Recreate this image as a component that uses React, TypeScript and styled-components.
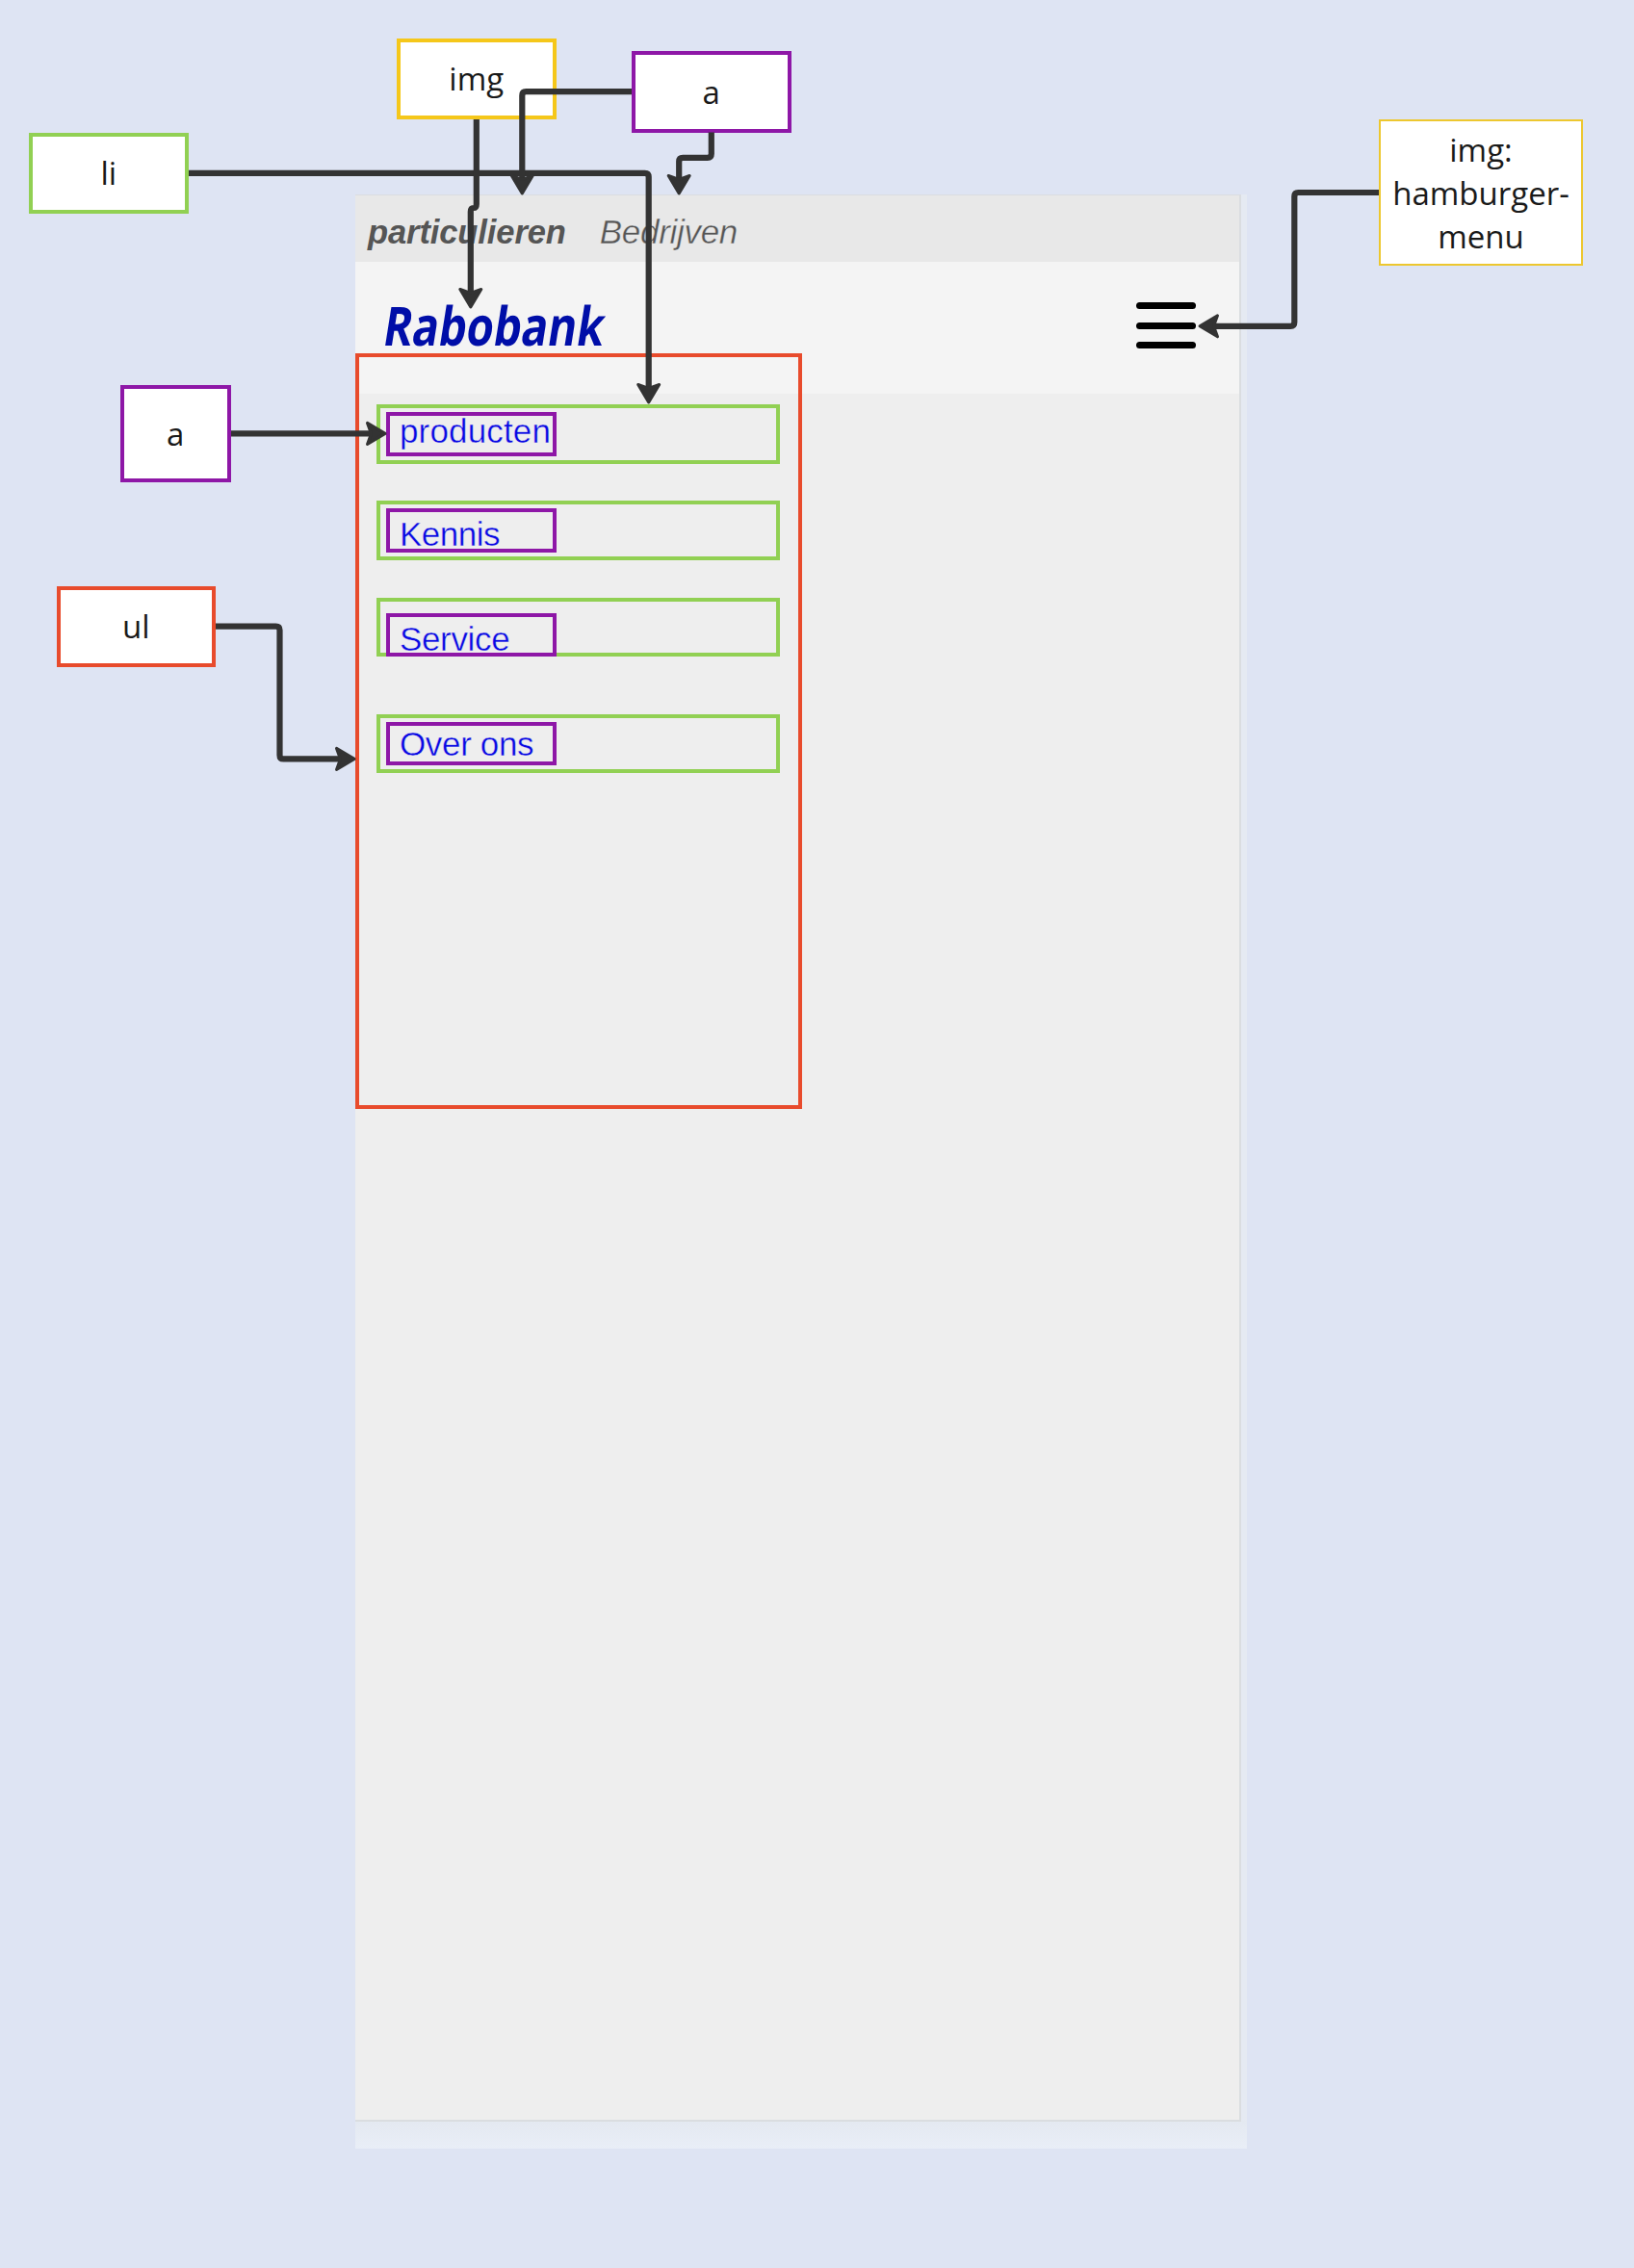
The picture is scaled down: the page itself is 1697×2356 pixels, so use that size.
import React from "react";
import styled, { createGlobalStyle } from "styled-components";

const GlobalStyle = createGlobalStyle`
  html, body { margin: 0; padding: 0; background: #dee4f3; }
  * { box-sizing: border-box; }
`;

const color = {
  green: "#91d053",
  yellow: "#f5c71a",
  purple: "#8e17a7",
  red: "#e84b2c",
  ink: "#333333",
};

const Board = styled.div`
  position: relative;
  width: 1697px;
  height: 2356px;
  padding: 202px 0 0 369px;
  overflow: hidden;
  background: #dee4f3;
`;

const Mockup = styled.div`
  width: 926px;
  height: 2030px;
  padding: 0 6px 28px 0;
  background: linear-gradient(#e5eaf2 0, #e5eaf2 2000px, #e4e9f1 2002px, #e9eef7 2030px);
`;

const Page = styled.div`
  display: flex;
  flex-direction: column;
  height: 2002px;
  border: solid #dadde0;
  border-width: 1px 2px 2px 0;
  background: #eeeeee;
  font-family: "Liberation Sans", Arial, sans-serif;
`;

const TopBar = styled.nav`
  display: flex;
  flex: none;
  gap: 35px;
  height: 69px;
  padding: 18px 0 0 13px;
  background: #e8e8e8;
`;

const Audience = styled.a<{ $active?: boolean }>`
  color: #555;
  font-size: ${(p) => (p.$active ? "34.5px" : "35px")};
  font-style: italic;
  font-weight: ${(p) => (p.$active ? 700 : 400)};
  line-height: 40px;
  letter-spacing: ${(p) => (p.$active ? "-0.1px" : "-0.3px")};
  -webkit-text-stroke: ${(p) => (p.$active ? "0" : "0.4px #e8e8e8")};
`;

const Header = styled.header`
  display: flex;
  flex: none;
  justify-content: space-between;
  align-items: flex-start;
  height: 137px;
  padding: 34px 45px 0 24px;
  background: #f4f4f4;
`;

const Logo = styled.svg`
  width: 250px;
  height: 60px;
  overflow: visible;
  font: 700 56px "Open Sans", sans-serif;
  fill: #000ea8;
`;

const Burger = styled.div`
  display: flex;
  flex-direction: column;
  gap: 13.7px;
  width: 62px;
  padding-top: 8px;
`;

const BurgerBar = styled.span`
  height: 7px;
  border-radius: 4px;
  background: #000;
`;

const Menu = styled.ul`
  width: 463.5px;
  height: 785px;
  margin: -42.5px 0 0;
  padding: 49.5px 0 0 18px;
  border: 4px solid ${color.red};
  list-style: none;
`;

const MenuItem = styled.li<{ $gap: number; $inset: number }>`
  width: 419px;
  height: 61.5px;
  margin-bottom: ${(p) => p.$gap}px;
  padding: ${(p) => p.$inset}px 0 0 6px;
  border: 4px solid ${color.green};
`;

const MenuLink = styled.a<{ $drop: number; $tracking: number }>`
  display: flex;
  width: 176.5px;
  height: 45.5px;
  padding: ${(p) => p.$drop}px 0 0 10px;
  border: 4px solid ${color.purple};
  color: #0808e4;
  font-size: 35px;
  line-height: 32px;
  letter-spacing: ${(p) => p.$tracking}px;
  white-space: nowrap;
  -webkit-text-stroke: 0.4px #eee;
`;

const Label = styled.div<{
  $x: number; $y: number; $w: number; $h: number; $color: string; $line?: number;
}>`
  position: absolute;
  left: ${(p) => p.$x}px;
  top: ${(p) => p.$y}px;
  display: flex;
  align-items: center;
  justify-content: center;
  width: ${(p) => p.$w}px;
  height: ${(p) => p.$h}px;
  border: ${(p) => p.$line ?? 4}px solid ${(p) => p.$color};
  background: #fff;
  color: #1a1a1a;
  font: 33px/45px "Open Sans", sans-serif;
  text-align: center;
  white-space: pre-line;
`;

const Connectors = styled.svg`
  position: absolute;
  inset: 0;
  width: 1697px;
  height: 2356px;
  pointer-events: none;
`;

const menu = [
  { text: "producten", gap: 38.5, inset: 4, drop: 0, tracking: 0.15 },
  { text: "Kennis", gap: 39, inset: 4, drop: 7, tracking: -0.5 },
  { text: "Service", gap: 59.5, inset: 12, drop: 7, tracking: -0.35 },
  { text: "Over ons", gap: 0, inset: 4, drop: 3, tracking: -0.35 },
];

const labels = [
  { text: "img", x: 412, y: 39.5, w: 165.5, h: 84.5, color: color.yellow },
  { text: "a", x: 656, y: 53, w: 165.5, h: 84.5, color: color.purple },
  { text: "li", x: 30, y: 137.5, w: 165.5, h: 84.5, color: color.green },
  { text: "img:\nhamburger-\nmenu", x: 1432, y: 124, w: 212, h: 152, color: "#edc72f", line: 2 },
  { text: "a", x: 125, y: 400, w: 114.5, h: 100.5, color: color.purple },
  { text: "ul", x: 58.5, y: 608.5, w: 165.5, h: 84.5, color: color.red },
];

const connectors = [
  { d: "M196 179.8H669.7Q673.7 179.8 673.7 183.8V404", tip: [673.7, 419.5], turn: 90 },
  { d: "M494.8 124V212Q494.8 216 491.8 216Q488.8 216 488.8 220V305", tip: [488.8, 320.5], turn: 90 },
  { d: "M656 95.2H546.3Q542.3 95.2 542.3 99.2V187", tip: [542.3, 202.5], turn: 90 },
  { d: "M738.8 137.5V159.8Q738.8 163.8 734.8 163.8H709.2Q705.2 163.8 705.2 167.8V187", tip: [705.2, 202.5], turn: 90 },
  { d: "M240 450.4H386", tip: [401.5, 450.4], turn: 0 },
  { d: "M224 650.6H286.5Q290.5 650.6 290.5 654.6V784.4Q290.5 788.4 294.5 788.4H354", tip: [369.5, 788.4], turn: 0 },
  { d: "M1432 200H1348.3Q1344.3 200 1344.3 204V334.8Q1344.3 338.8 1340.3 338.8H1260", tip: [1244.5, 338.8], turn: 180 },
];

export default function App() {
  return (
    <>
      <GlobalStyle />
      <Board>
        <Mockup>
          <Page>
            <TopBar>
              <Audience $active>particulieren</Audience>
              <Audience>Bedrijven</Audience>
            </TopBar>
            <Header>
              <Logo>
                <text
                  transform="translate(3 52.5) skewX(-9)"
                  textLength="229"
                  lengthAdjust="spacingAndGlyphs"
                >
                  Rabobank
                </text>
              </Logo>
              <Burger>
                <BurgerBar />
                <BurgerBar />
                <BurgerBar />
              </Burger>
            </Header>
            <Menu>
              {menu.map((item) => (
                <MenuItem key={item.text} $gap={item.gap} $inset={item.inset}>
                  <MenuLink $drop={item.drop} $tracking={item.tracking}>
                    {item.text}
                  </MenuLink>
                </MenuItem>
              ))}
            </Menu>
          </Page>
        </Mockup>
        {labels.map((l) => (
          <Label key={`${l.x}-${l.y}`} $x={l.x} $y={l.y} $w={l.w} $h={l.h} $color={l.color} $line={l.line}>
            {l.text}
          </Label>
        ))}
        <Connectors viewBox="0 0 1697 2356">
          {connectors.map((c) => (
            <g key={c.d}>
              <path d={c.d} fill="none" stroke={color.ink} strokeWidth="6.2" />
              <path
                d="M-1.5 0L-20 -11L-16 0L-20 11Z"
                fill={color.ink}
                stroke={color.ink}
                strokeWidth="3"
                strokeLinejoin="round"
                transform={`translate(${c.tip[0]} ${c.tip[1]}) rotate(${c.turn})`}
              />
            </g>
          ))}
        </Connectors>
      </Board>
    </>
  );
}
